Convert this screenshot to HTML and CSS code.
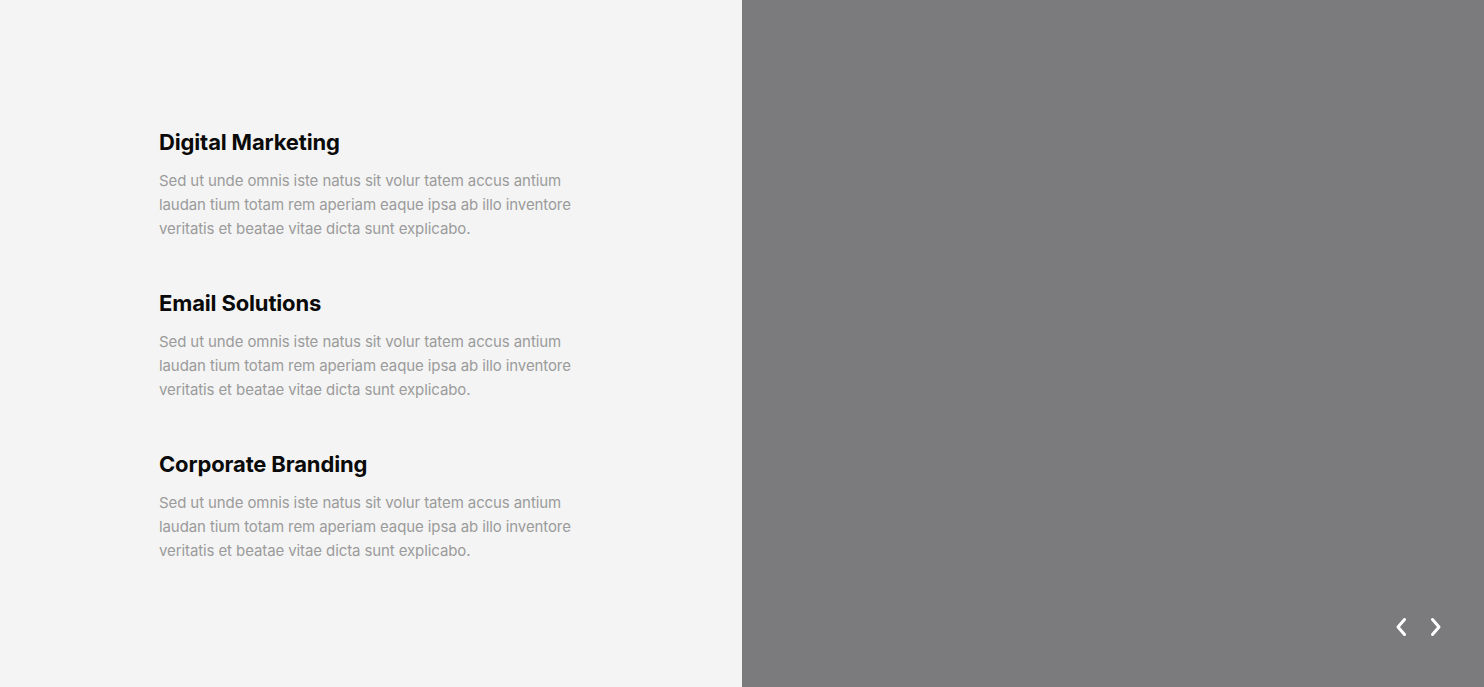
FILE: index.html
```html
<!DOCTYPE html>
<html>
<head>
<meta charset="utf-8">
<link rel="stylesheet" href="styles.css">
</head>
<body>
<main class="split">
  <section class="services">
    <article class="service">
      <h3 class="service-title">Digital Marketing</h3>
      <p class="service-text">Sed ut unde omnis iste natus sit volur tatem accus antium laudan tium totam rem aperiam eaque ipsa ab illo inventore veritatis et beatae vitae dicta sunt explicabo.</p>
    </article>
    <article class="service">
      <h3 class="service-title">Email Solutions</h3>
      <p class="service-text">Sed ut unde omnis iste natus sit volur tatem accus antium laudan tium totam rem aperiam eaque ipsa ab illo inventore veritatis et beatae vitae dicta sunt explicabo.</p>
    </article>
    <article class="service">
      <h3 class="service-title">Corporate Branding</h3>
      <p class="service-text">Sed ut unde omnis iste natus sit volur tatem accus antium laudan tium totam rem aperiam eaque ipsa ab illo inventore veritatis et beatae vitae dicta sunt explicabo.</p>
    </article>
  </section>
  <section class="media">
    <div class="slider-nav">
      <button class="nav-btn" aria-label="Previous">
        <svg width="14" height="22" viewBox="0 0 14 22"><path d="M10.5 3.5 L4 11 L10.5 18.5" fill="none" stroke="#fff" stroke-width="3" stroke-linecap="round" stroke-linejoin="round"/></svg>
      </button>
      <button class="nav-btn" aria-label="Next">
        <svg width="14" height="22" viewBox="0 0 14 22"><path d="M3.5 3.5 L10 11 L3.5 18.5" fill="none" stroke="#fff" stroke-width="3" stroke-linecap="round" stroke-linejoin="round"/></svg>
      </button>
    </div>
  </section>
</main>
</body>
</html>
```
FILE: styles.css
```css
* { box-sizing: border-box; }
html, body { margin: 0; padding: 0; }
body {
  font-family: "Inter", "Open Sans", sans-serif;
  width: 1484px;
  height: 687px;
  overflow: hidden;
}
.split {
  display: flex;
  height: 687px;
}
.services {
  width: 742px;
  background: #f4f4f4;
  padding: 127px 0 0 159px;
  display: flex;
  flex-direction: column;
  gap: 47px;
}
.service-title {
  margin: 0 0 12px;
  font-size: 22px;
  line-height: 30px;
  font-weight: 700;
  color: #0a0a0a;
  letter-spacing: -0.15px;
}
.service-text {
  margin: 0;
  width: 430px;
  font-size: 15px;
  line-height: 24px;
  color: #9b9b9b;
  letter-spacing: -0.1px;
}
.media {
  flex: 1;
  background: #7b7b7d;
  display: flex;
  align-items: flex-end;
  justify-content: flex-end;
  padding: 0 41px 49px 0;
}
.slider-nav {
  display: flex;
  gap: 21px;
}
.nav-btn {
  background: none;
  border: 0;
  padding: 0;
  width: 14px;
  height: 22px;
  cursor: pointer;
  display: block;
}
.nav-btn svg { display: block; }
```
